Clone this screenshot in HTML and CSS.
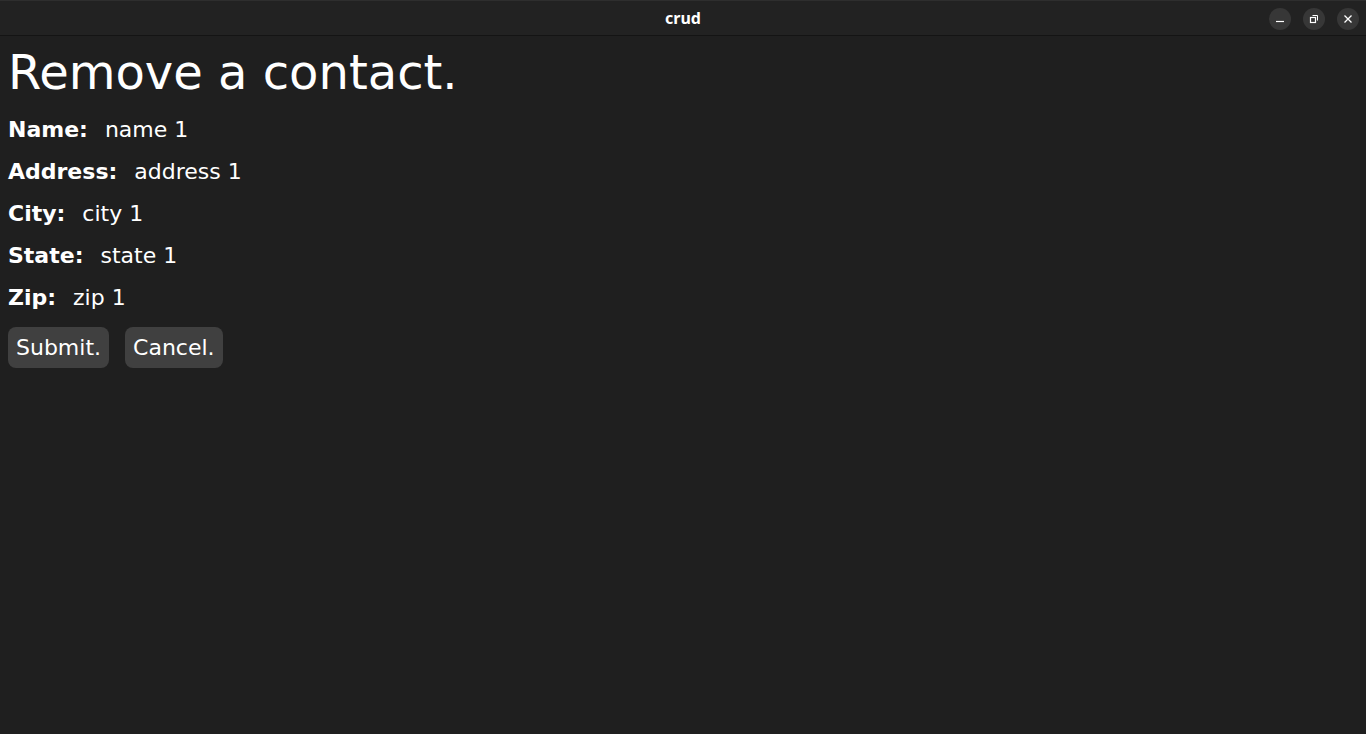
FILE: index.html
```html
<!DOCTYPE html>
<html>
<head>
<meta charset="utf-8">
<link rel="stylesheet" href="styles.css">
</head>
<body>
<div class="titlebar">
  <div class="title">crud</div>
  <div class="controls">
    <span class="ctl"><svg width="10" height="10" viewBox="0 0 10 10"><path d="M1 7.5h8" stroke="#fff" stroke-width="1.2"/></svg></span>
    <span class="ctl"><svg width="10" height="10" viewBox="0 0 10 10"><rect x="1.5" y="3.5" width="5" height="5" fill="none" stroke="#fff" stroke-width="1.2"/><path d="M3.5 1.5h5v5" fill="none" stroke="#fff" stroke-width="1"/></svg></span>
    <span class="ctl"><svg width="10" height="10" viewBox="0 0 10 10"><path d="M1.5 1.5l7 7M8.5 1.5l-7 7" stroke="#fff" stroke-width="1.3"/></svg></span>
  </div>
</div>
<main class="content">
  <h1 class="heading">Remove a contact.</h1>
  <div class="row"><span class="label">Name:</span><span class="value">name 1</span></div>
  <div class="row"><span class="label">Address:</span><span class="value">address 1</span></div>
  <div class="row"><span class="label">City:</span><span class="value">city 1</span></div>
  <div class="row"><span class="label">State:</span><span class="value">state 1</span></div>
  <div class="row"><span class="label">Zip:</span><span class="value">zip 1</span></div>
  <div class="buttons">
    <button class="btn">Submit.</button>
    <button class="btn">Cancel.</button>
  </div>
</main>
</body>
</html>
```
FILE: styles.css
```css
html, body {
  margin: 0;
  padding: 0;
  background: #1f1f1f;
  color: #fff;
  font-family: "DejaVu Sans", sans-serif;
  height: 100%;
}
.titlebar {
  height: 36px;
  background: #222222;
  border-top: 1px solid #2e2e2e;
  border-bottom: 1px solid #141414;
  box-sizing: border-box;
  display: flex;
  align-items: center;
  justify-content: center;
  position: relative;
}
.title {
  font-family: "Noto Sans", "DejaVu Sans", sans-serif;
  font-weight: bold;
  font-size: 16px;
  color: #fff;
}
.controls {
  position: absolute;
  right: 7px;
  top: 7px;
  display: flex;
  gap: 12px;
}
.ctl {
  width: 22px;
  height: 22px;
  border-radius: 50%;
  background: #373737;
  display: flex;
  align-items: center;
  justify-content: center;
}
.content {
  padding: 0 8px;
}
.heading {
  margin: 0;
  padding-top: 8px;
  font-size: 48px;
  font-weight: normal;
  line-height: 56px;
}
.row {
  display: flex;
  gap: 17px;
  font-size: 22px;
  line-height: 24px;
  margin-top: 18px;
}
.label { font-weight: bold; }
.buttons {
  display: flex;
  gap: 16px;
  margin-top: 17px;
}
.btn {
  font-family: "DejaVu Sans", sans-serif;
  font-size: 22px;
  color: #fff;
  background: #404040;
  border: none;
  border-radius: 8px;
  height: 41px;
  padding: 0 8px;
}
```
